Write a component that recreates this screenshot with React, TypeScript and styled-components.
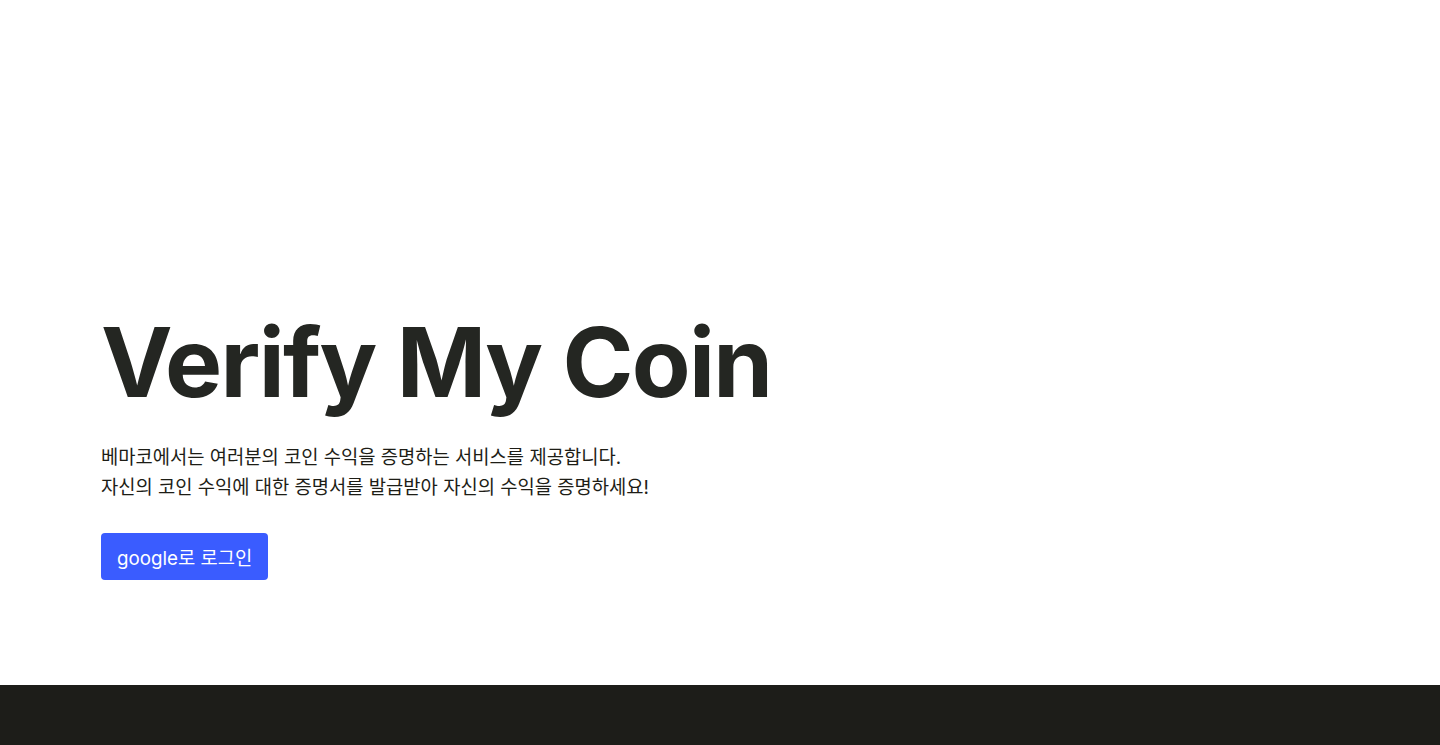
import React from "react";
import styled, { createGlobalStyle } from "styled-components";

const Global = createGlobalStyle`
  html, body { margin: 0; padding: 0; background: #ffffff; }
  body { font-family: Inter, "Noto Sans CJK KR", sans-serif; }
  * { box-sizing: border-box; }
`;

const Page = styled.div`
  display: flex;
  flex-direction: column;
  min-height: 745px;
`;

const Hero = styled.main`
  height: 685px;
  display: flex;
  flex-direction: column;
  align-items: flex-start;
  padding: 303px 101px 0;
`;

const Title = styled.h1`
  margin: 0;
  font-family: Inter, sans-serif;
  font-weight: 700;
  font-size: 96px;
  line-height: 118px;
  letter-spacing: -1.7px;
  color: #242622;
`;

const Desc = styled.p`
  margin: 22px 0 0;
  font-family: Inter, "Noto Sans CJK KR", sans-serif;
  font-size: 18.75px;
  line-height: 30px;
  color: #1d1d16;
`;

const LoginButton = styled.button`
  margin-top: 30px;
  height: 47px;
  padding: 0 16px;
  border: none;
  border-radius: 4px;
  background: #3a5cff;
  color: #ffffff;
  font-family: Inter, "Noto Sans CJK KR", sans-serif;
  font-size: 18.75px;
  cursor: pointer;
`;

const Footer = styled.footer`
  flex: 1;
  height: 60px;
  background: #1d1d19;
`;

export default function App() {
  return (
    <Page>
      <Global />
      <Hero>
        <Title>Verify My Coin</Title>
        <Desc>
          베마코에서는 여러분의 코인 수익을 증명하는 서비스를 제공합니다.
          <br />
          자신의 코인 수익에 대한 증명서를 발급받아 자신의 수익을 증명하세요!
        </Desc>
        <LoginButton>google로 로그인</LoginButton>
      </Hero>
      <Footer />
    </Page>
  );
}
